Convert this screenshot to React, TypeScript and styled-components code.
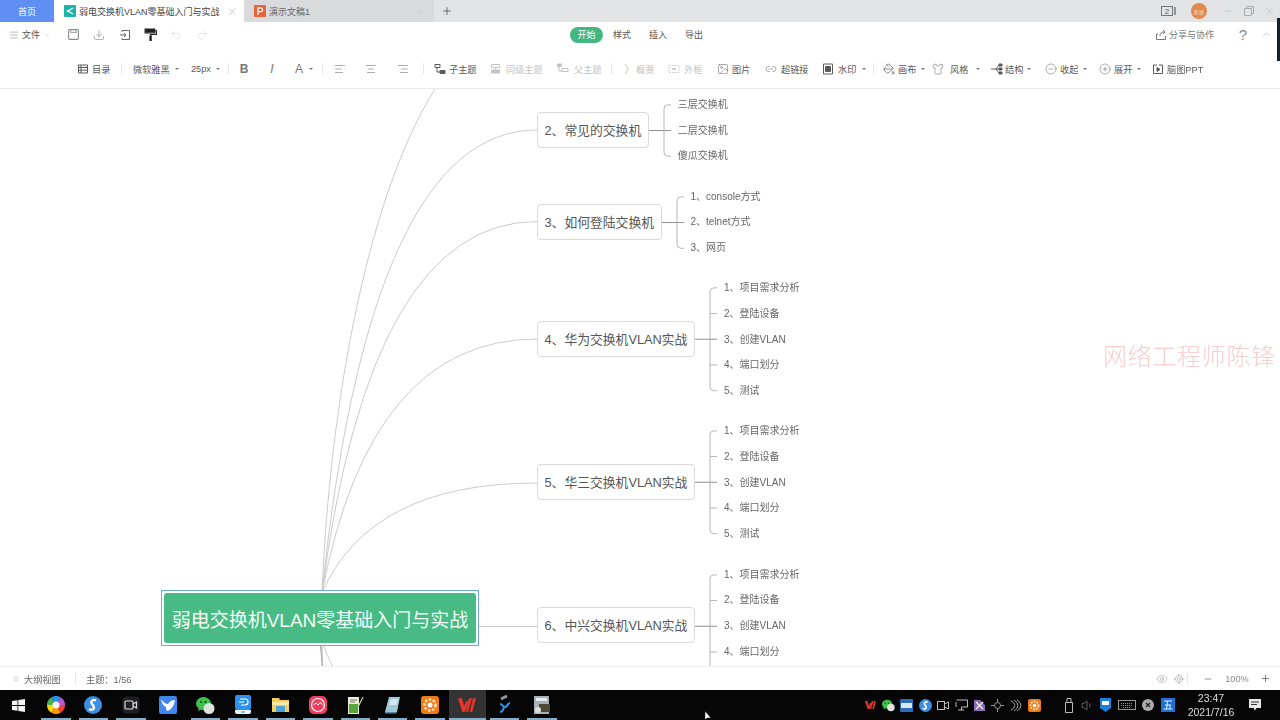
import React from 'react';
import styled, { createGlobalStyle } from 'styled-components';
import {
  AlignCenter, AlignLeft, AlignRight, ChevronDown, ChevronUp, CircleMinus, CirclePlus, Download,
  Eye, Image, Link2, LocateFixed, Menu, Minus, PaintBucket, Plus, Redo2, Shirt, Undo2,
  Volume1, X,
} from 'lucide-react';

const GlobalStyle = createGlobalStyle`
  html, body { margin: 0; padding: 0; background: #fff; }
  body { font-family: "Liberation Sans", "Noto Sans CJK SC", sans-serif; overflow: hidden; }
  * { box-sizing: border-box; }
`;

const Screen = styled.div`
  position: relative;
  width: 1280px;
  height: 720px;
  display: flex;
  flex-direction: column;
  overflow: hidden;
  filter: blur(0.45px);
`;

/* ---------- tab strip ---------- */
const TabStrip = styled.div`
  height: 22px;
  background: #e1e3e4;
  display: flex;
  align-items: stretch;
  flex-shrink: 0;
`;
const HomeTab = styled.div`
  width: 54px;
  background: #5f8ff2;
  color: #fff;
  font-size: 9px;
  display: flex;
  align-items: center;
  justify-content: center;
`;
const DocTab = styled.div<{ $active?: boolean }>`
  width: 190px;
  background: ${(p) => (p.$active ? '#fff' : '#d9dadb')};
  color: ${(p) => (p.$active ? '#444' : '#666')};
  display: flex;
  align-items: center;
  padding: 0 ${(p) => (p.$active ? 6 : 10)}px 0 10px;
  font-size: 9px;
  gap: 3px;
  white-space: nowrap;
  span { flex: 1; }
`;
const NewTab = styled.div`
  width: 26px;
  display: flex;
  align-items: center;
  justify-content: center;
  color: #444;
`;
const WindowControls = styled.div`
  margin-left: auto;
  display: flex;
  align-items: center;
  color: #aaa;
`;
const Avatar = styled.div`
  width: 16px;
  height: 16px;
  border-radius: 50%;
  background: #e08a52;
  color: #fbe0cc;
  font-size: 5px;
  display: flex;
  align-items: center;
  justify-content: center;
  margin: 0 10px 0 14px;
`;
const WinBtn = styled.div`
  width: 21px;
  display: flex;
  justify-content: center;
`;
const DarkEdge = styled.div`
  position: absolute;
  right: 0;
  top: 18px;
  width: 3px;
  height: 43px;
  background: #16202e;
`;

/* ---------- menu row ---------- */
const MenuRow = styled.div`
  height: 25px;
  display: flex;
  align-items: center;
  flex-shrink: 0;
  background: #fff;
  color: #555;
  font-size: 9px;
`;
const FileMenu = styled.div`
  width: 61px;
  padding-left: 9px;
  display: flex;
  align-items: center;
  gap: 3px;
`;
const QuickTools = styled.div`
  width: 509px;
  display: flex;
  align-items: center;
`;
const QuickBtn = styled.div<{ $dim?: boolean }>`
  width: 25.6px;
  display: flex;
  justify-content: center;
  color: ${(p) => (p.$dim ? '#ccc' : '#666')};
`;
const ModeTabs = styled.div`
  display: flex;
  align-items: center;
`;
const ModeTab = styled.div<{ $active?: boolean }>`
  height: 16px;
  line-height: 16px;
  width: ${(p) => (p.$active ? '33px' : '18px')};
  margin-right: ${(p) => (p.$active ? '10px' : '18px')};
  border-radius: 8px;
  text-align: center;
  white-space: nowrap;
  background: ${(p) => (p.$active ? '#45b680' : 'transparent')};
  color: ${(p) => (p.$active ? '#fff' : '#555')};
`;
const ShareArea = styled.div`
  margin-left: auto;
  display: flex;
  align-items: center;
  gap: 2px;
  padding-right: 7px;
  color: #777;
`;
const HelpMark = styled.div`
  width: 12px;
  margin: 0 9px 0 21px;
  text-align: center;
  font-size: 15px;
  line-height: 16px;
  color: #888;
`;

/* ---------- format toolbar ---------- */
const FormatBar = styled.div`
  height: 42px;
  padding: 2px 0 0 77px;
  display: flex;
  align-items: center;
  flex-shrink: 0;
  background: #fff;
  border-bottom: 1px solid #e9e9e9;
`;
const Tool = styled.div<{ $w: number; $gap: number; $off?: boolean }>`
  width: ${(p) => p.$w}px;
  display: flex;
  align-items: center;
  gap: ${(p) => p.$gap}px;
  font-size: 9.2px;
  white-space: nowrap;
  color: ${(p) => (p.$off ? '#c4c4c4' : '#5a5a5a')};
`;
const Caret = styled.i`
  width: 0;
  height: 0;
  margin-left: 2px;
  border: 2px solid transparent;
  border-top: 2.5px solid #777;
  border-bottom: 0;
`;
const Sep = styled.div<{ $after: number }>`
  width: 1px;
  height: 11px;
  background: #e6e6e6;
  margin-right: ${(p) => p.$after}px;
`;
const Glyph = styled.span<{ $italic?: boolean; $bold?: boolean }>`
  width: 12px;
  text-align: center;
  font-size: 12px;
  font-style: ${(p) => (p.$italic ? 'italic' : 'normal')};
  font-weight: ${(p) => (p.$bold ? 700 : 400)};
  color: #777;
`;

/* ---------- mind map ---------- */
const MapCanvas = styled.div`
  position: relative;
  flex: 1;
  overflow: hidden;
  background: #fff;
`;
const Lines = styled.svg`
  position: absolute;
  inset: 0;
`;
const Branch = styled.div<{ $top: number }>`
  position: absolute;
  left: 537px;
  top: ${(p) => p.$top}px;
  display: flex;
  align-items: center;
`;
const TopicBox = styled.div`
  height: 36px;
  margin-bottom: 1.2px;
  padding: 0 6.5px;
  border: 1px solid #d9d9d9;
  border-radius: 4px;
  background: #fff;
  color: #555;
  font-size: 12.8px;
  line-height: 35px;
  white-space: nowrap;
`;
const LeafList = styled.div`
  display: flex;
  flex-direction: column;
`;
const Leaf = styled.div`
  height: 25.7px;
  line-height: 25.7px;
  font-size: 10px;
  color: #666;
  white-space: nowrap;
`;
const RootFrame = styled.div`
  position: absolute;
  left: 161px;
  top: 501px;
  width: 318px;
  height: 56px;
  padding: 2px;
  border: 1px solid #6ea6ee;
  background: #fff;
`;
const RootTopic = styled.div`
  height: 100%;
  border-radius: 3px;
  background: #48bb85;
  color: #f2fbf6;
  font-size: 19px;
  display: flex;
  align-items: center;
  justify-content: center;
  white-space: nowrap;
`;
const Watermark = styled.div`
  position: absolute;
  left: 1103px;
  top: 248px;
  font-family: "Liberation Serif", "Noto Sans CJK SC", serif;
  font-size: 24px;
  font-weight: 300;
  letter-spacing: 0.7px;
  color: #f8cfcf;
  white-space: nowrap;
`;

/* ---------- status bar ---------- */
const StatusBar = styled.div`
  height: 24px;
  display: flex;
  align-items: center;
  flex-shrink: 0;
  padding-left: 13px;
  background: #fff;
  border-top: 1px solid #eee;
  color: #666;
  font-size: 9.2px;
`;
const OutlineBtn = styled.div`
  width: 62px;
  display: flex;
  align-items: center;
  gap: 5px;
`;
const StatusSep = styled.div<{ $after: number }>`
  width: 1px;
  height: 11px;
  background: #e6e6e6;
  margin-right: ${(p) => p.$after}px;
`;
const ZoomArea = styled.div`
  margin-left: auto;
  display: flex;
  align-items: center;
  padding-right: 8px;
  color: #777;
`;
const ZoomIcon = styled.div<{ $w: number; $dark?: boolean }>`
  width: ${(p) => p.$w}px;
  display: flex;
  justify-content: center;
  color: ${(p) => (p.$dark ? '#444' : '#888')};
`;

/* ---------- taskbar ---------- */
const Taskbar = styled.div`
  height: 30px;
  background: #060606;
  display: flex;
  align-items: stretch;
  flex-shrink: 0;
  color: #ddd;
`;
const TaskCell = styled.div<{ $open?: boolean; $focus?: boolean }>`
  position: relative;
  width: 37.4px;
  display: flex;
  align-items: center;
  justify-content: center;
  background: ${(p) => (p.$focus ? '#333' : 'transparent')};
  &::after {
    content: '';
    position: absolute;
    left: ${(p) => (p.$focus ? 0 : 4)}px;
    right: ${(p) => (p.$focus ? 0 : 4)}px;
    bottom: 0;
    height: 2px;
    background: ${(p) => (p.$open ? '#86aecb' : 'transparent')};
  }
`;
const Tray = styled.div`
  margin-left: auto;
  display: flex;
  align-items: center;
`;
const TrayIcon = styled.div<{ $w?: number }>`
  width: ${(p) => p.$w ?? 18.2}px;
  display: flex;
  justify-content: center;
  color: #bbb;
`;
const TrayGap = styled.div`
  width: 17px;
`;
const Clock = styled.div`
  width: 64px;
  text-align: center;
  font-size: 10.5px;
  line-height: 14px;
  color: #dcdcdc;
`;
const NoticeBtn = styled.div`
  width: 24px;
  margin-right: 13px;
  display: flex;
  justify-content: center;
`;
const Cursor = styled.svg`
  position: absolute;
  left: 705px;
  top: 711px;
`;

/* ---------- drawings ---------- */
const Ic = ({ s = 12, children }: { s?: number; children: React.ReactNode }) => (
  <svg width={s} height={s} viewBox="0 0 12 12" fill="none" stroke="currentColor" strokeWidth="1">
    {children}
  </svg>
);
const TocIcon = () => <Ic><path d="M1.5 2h9v8h-9zM1.5 4.5h9M1.5 7.2h9M4 2v8" /></Ic>;
const SubIcon = () => <Ic><path d="M1 1.5h5v3H1zM3 4.5v4.5h3" /><path d="M6 7.5h5v3H6z" fill="currentColor" /></Ic>;
const SiblingIcon = () => <Ic><path d="M1.5 1.5h8v3h-8zM5.5 4.5v2" /><path d="M1.5 7h8v3h-8z" fill="currentColor" /></Ic>;
const ParentIcon = () => <Ic><path d="M5 5.5h6v3H5zM2 3v5h3" /><path d="M.5 1h4v2.5h-4z" fill="currentColor" /></Ic>;
const BraceIcon = () => <Ic><path d="M3 1.5c2.5 0 1.5 4.5 3.5 4.5-2 0-1 4.5-3.5 4.5" /></Ic>;
const BoundaryIcon = () => <Ic><path d="M1 2.5h10v7H1z" strokeDasharray="1.6 1.2" /><path d="M4 6h4" strokeWidth="1.6" /></Ic>;
const MarkIcon = () => <Ic><path d="M1.5 1h9v10h-9z" /><path d="M3.5 3.5h5v5h-5z" fill="currentColor" /></Ic>;
const TreeIcon = () => <Ic><path d="M0 6h5M5 6l3-4M5 6l3 4M5 6h3" /><path d="M8 1h3v2H8zM8 5h3v2H8zM8 9h3v2H8z" fill="currentColor" /></Ic>;
const PptIcon = () => <Ic><path d="M3 2H1.5v8.5h9V2H9M4 1v2M8 1v2" /><path d="M5 4.5 8 6.5 5 8.5z" fill="currentColor" /></Ic>;
const SaveIcon = () => <Ic s={13}><rect x="1.5" y="1.5" width="9" height="9" rx="1" stroke="#888" /><path d="M3.5 1.5v2.5h5V1.5" stroke="#aaa" /></Ic>;
const ExportIcon = () => <Ic s={12}><path d="M3 3V1.5h7.5v9H3V9M1 6h6M5 4l2 2-2 2" /></Ic>;
const PainterIcon = () => (
  <svg width="13" height="13" viewBox="0 0 12 12">
    <path d="M1 1h9v3.5H1zM10 2.5h1.5v3.5H6v1.5" fill="none" stroke="#222" strokeWidth="1" />
    <path d="M1 1h9v3H1zM5 7h2.2v5H5z" fill="#222" />
  </svg>
);
const ShareIcon = () => <Ic><path d="M3 5H1.5v5.5h9V7M5 7c0-2.500 1.500-4 4-4M8 1l2 2-2 2" /></Ic>;
const SwitchIcon = () => (
  <svg width="16" height="12" viewBox="0 0 16 12" fill="none" stroke="#777">
    <rect x=".5" y="1.500" width="11" height="9" />
    <path d="M14 2v8" strokeWidth="1.500" />
    <text x="6" y="9" fontSize="8" textAnchor="middle" fill="#666" stroke="none" fontFamily="Liberation Sans">2</text>
  </svg>
);
const TealDoc = () => (
  <svg width="12" height="12" viewBox="0 0 12 12">
    <rect width="12" height="12" rx="1" fill="#1fb3ad" />
    <path d="M9 3 4 6l5 3" fill="none" stroke="#fff" strokeWidth="1.200" />
    <circle cx="4" cy="6" r="1.200" fill="#fff" />
  </svg>
);
const PptDoc = () => (
  <svg width="12" height="12" viewBox="0 0 12 12">
    <rect width="12" height="12" rx="1" fill="#e8623b" />
    <path d="M4 10V2.800h2.600a1.800 1.800 0 0 1 0 3.800H4" fill="none" stroke="#fff" strokeWidth="1.300" />
  </svg>
);

const Pinwheel = () => {
  const colors = ['#f44336', '#ff9800', '#ffd600', '#4caf50', '#2196f3', '#ba55d3'];
  return (
    <svg width="18" height="18" viewBox="-9 -9 18 18">
      {colors.map((c, i) => {
        const a0 = (i * Math.PI) / 3;
        const a1 = ((i + 1) * Math.PI) / 3;
        return (
          <path
            key={c}
            fill={c}
            d={`M0 0L${9 * Math.cos(a0)} ${9 * Math.sin(a0)}A9 9 0 0 1 ${9 * Math.cos(a1)} ${9 * Math.sin(a1)}Z`}
          />
        );
      })}
      <circle r="3.500" fill="#eef3ff" />
    </svg>
  );
};
const WinLogo = () => (
  <svg width="13" height="13" viewBox="0 0 13 13" fill="#f4f4f4">
    <path d="M0 2 5.500 1.200V6H0zM6.300 1.100 13 0v6H6.300zM0 7h5.500v4.800L0 11zM6.300 7H13v6l-6.700-1z" />
  </svg>
);
const SogouS = ({ s = 18 }: { s?: number }) => (
  <svg width={s} height={s} viewBox="0 0 18 18">
    <circle cx="9" cy="9" r="9" fill="#3d8fe0" />
    <path d="M12 4.500C9 3 6 5 8 8c1.500 2 3 3 1.500 5-1 1-3 .8-4.500 0" fill="none" stroke="#fff" strokeWidth="2.300" />
  </svg>
);
const CameraTile = () => (
  <svg width="18" height="18" viewBox="0 0 18 18" fill="none" stroke="#ddd" strokeWidth="1.200">
    <rect x=".5" y=".5" width="17" height="17" rx="4" fill="#1d1f22" stroke="none" />
    <rect x="3" y="5" width="8" height="8" rx="1" />
    <path d="M11 8l3.500-2v6L11 10" />
  </svg>
);
const FeatherTile = () => (
  <svg width="18" height="18" viewBox="0 0 18 18">
    <rect width="18" height="18" rx="2" fill="#3f86ef" />
    <path d="M2 3c3 4 5 5 7 5 2-3 4-4 7-4-1 5-3 10-8 11-1-1-1-3-1-4C4 10 3 7 2 3z" fill="#fff" />
  </svg>
);
const WeChat = ({ s = 19 }: { s?: number }) => (
  <svg width={s} height={s} viewBox="0 0 19 19">
    <ellipse cx="7.500" cy="7.500" rx="7.500" ry="6.500" fill="#3fc24a" />
    <path d="M3 11l-1 4 4-2z" fill="#3fc24a" />
    <circle cx="13" cy="12.500" r="5.500" fill="#dfe3e0" />
    <circle cx="5" cy="6" r="1" fill="#14401a" />
    <circle cx="9.500" cy="6" r="1" fill="#14401a" />
  </svg>
);
const BlueTile = () => (
  <svg width="18" height="20" viewBox="0 0 18 20">
    <rect x="1" y="0" width="16" height="15" rx="2" fill="#2f92ee" />
    <path d="M1 15h16v2a2 2 0 0 1-2 2H3a2 2 0 0 1-2-2z" fill="#e9f3fb" />
    <path d="M6 4h5a3 3 0 0 1 0 6H7M5 7h5" fill="none" stroke="#fff" strokeWidth="1.200" />
    <rect x="7" y="16.500" width="4" height="1" fill="#2f92ee" />
  </svg>
);
const FolderIcon = () => (
  <svg width="17" height="16" viewBox="0 0 17 16">
    <path d="M0 1h7l1 2h9v12H0z" fill="#f3cf5e" />
    <rect x="0" y="5" width="17" height="3" fill="#fbe7a5" />
    <rect x="4" y="9" width="9" height="6" fill="#4ba3d8" />
  </svg>
);
const PinkTile = () => (
  <svg width="18" height="18" viewBox="0 0 18 18">
    <rect width="18" height="18" rx="5" fill="#ee3e62" />
    <circle cx="9" cy="9" r="6.500" fill="none" stroke="#fff" strokeWidth="1.200" />
    <path d="M4.500 9 7 7l2 2 2-2.500 2.500 2" fill="none" stroke="#fff" strokeWidth="1" />
  </svg>
);
const NoteGreen = () => (
  <svg width="18" height="19" viewBox="0 0 18 19">
    <path d="M2 1h11v17H2z" fill="#e9efd8" />
    <rect x="3" y="8" width="9" height="9" fill="#56a53d" />
    <path d="M4 4h7M4 6h5" stroke="#777" />
    <path d="M12 11l5-10" stroke="#c9d08a" strokeWidth="1.300" />
  </svg>
);
const NoteBlue = () => (
  <svg width="17" height="18" viewBox="0 0 17 18">
    <path d="M5 1h11l-3 15H1z" fill="#9fc7d8" />
    <path d="M1 16h12l-1 1.500H1z" fill="#5f8797" />
    <path d="M7 3h7l-1.500 6H5z" fill="#d3e8f0" />
  </svg>
);
const GearTile = ({ s = 18 }: { s?: number }) => (
  <svg width={s} height={s} viewBox="0 0 18 18">
    <rect width="18" height="18" rx="3" fill="#f07b14" />
    <circle cx="9" cy="9" r="5.500" fill="none" stroke="#fbe3c9" strokeWidth="2.500" strokeDasharray="2.500 1.500" />
    <circle cx="9" cy="9" r="2.500" fill="#fff" />
  </svg>
);
const WpsW = ({ s = 18 }: { s?: number }) => (
  <svg width={s} height={s * 0.8} viewBox="0 0 18 14">
    <path d="M0 0h4l2.200 8L8 3h2.500l-3.500 11H4.500zM11 0h3l-4 14H8z M15 0h3l-3.800 14h-2.500z" fill="#e8352c" />
  </svg>
);
const NodesIcon = () => (
  <svg width="14" height="20" viewBox="0 0 14 20" fill="none" stroke="#2f8fe0" strokeWidth="2.200">
    <path d="M2 9c3 0 2 3 5 3M12 8c-3 0-2 4-5 4M2 17c4 0 2-4 5-5" />
    <path d="M3 4l6-3" stroke="#8a96a0" strokeWidth="3" />
  </svg>
);
const ArchiveIcon = () => (
  <svg width="18" height="20" viewBox="0 0 18 20">
    <rect x="1" y="1" width="15" height="18" fill="#a8b1b8" />
    <rect x="3" y="3" width="11" height="3" fill="#e6ebef" />
    <rect x="6" y="9" width="11" height="8" fill="#4b4a36" />
    <circle cx="5" cy="15" r="3" fill="#dedfd8" />
  </svg>
);
const FileBlue = () => (
  <svg width="13" height="13" viewBox="0 0 13 13">
    <rect width="13" height="13" rx="1" fill="#2e6bb3" />
    <rect x="1" y="4" width="11" height="5" fill="#dbe7f2" />
  </svg>
);
const PurpleMark = () => (
  <svg width="13" height="13" viewBox="0 0 13 13">
    <path d="M1 1h6l5 5v6H1z" fill="#8d6ab5" />
    <path d="M3 3l7 7M10 3l-7 7" stroke="#eee" strokeWidth="1.400" />
  </svg>
);
const TeamBlue = () => (
  <svg width="11" height="14" viewBox="0 0 11 14">
    <path d="M0 0h11v10l-5.500 4L0 10z" fill="#1b7fdc" />
    <rect x="2" y="3" width="7" height="4" fill="#fff" />
  </svg>
);
const ImeTile = () => (
  <svg width="14" height="14" viewBox="0 0 14 14" stroke="#dfeeff" fill="none">
    <rect width="14" height="14" fill="#1e6fd0" stroke="none" />
    <path d="M3 3h8M4 7h6M2.500 11h9M6.500 3 5.500 11M9 7v4" />
  </svg>
);
const KeyboardIcon = () => (
  <svg width="18" height="12" viewBox="0 0 18 12" fill="none" stroke="#999">
    <rect x=".5" y="1.500" width="17" height="9" />
    <path d="M3 4.500h12M3 6.500h12M5 8.500h8" strokeDasharray="1 1" />
  </svg>
);
const CircleX = () => (
  <svg width="12" height="12" viewBox="0 0 12 12">
    <circle cx="6" cy="6" r="6" fill="#aaa" />
    <path d="M4 4l4 4M8 4l-4 4" stroke="#222" strokeWidth="1.300" />
  </svg>
);
const UsbIcon = () => (
  <svg width="8" height="15" viewBox="0 0 8 15" fill="none" stroke="#bbb">
    <path d="M.5 4.500h7v10h-7zM2 4.500V.5h4v4" />
  </svg>
);
const MonitorIcon = () => (
  <svg width="13" height="12" viewBox="0 0 13 12" fill="none" stroke="#bbb">
    <path d="M1.500 1h11v7h-6v3M3 11h6M1 3v5" />
  </svg>
);
const GizmoIcon = () => (
  <svg width="13" height="13" viewBox="0 0 13 13" fill="none" stroke="#999">
    <circle cx="6.500" cy="6.500" r="3" />
    <path d="M6.500 0v3M6.500 10v3M0 6.500h3M10 6.500h3" />
  </svg>
);
const WaveIcon = () => (
  <svg width="13" height="13" viewBox="0 0 13 13" fill="none" stroke="#aaa">
    <path d="M2 2c5 2 5 7 0 9M5 1c5 3 5 8 0 11M8 1c5 3 5 8 0 11" />
  </svg>
);
const NoticeIcon = () => (
  <svg width="12" height="12" viewBox="0 0 12 12">
    <path d="M0 0h12v9H7.500L6 11.500 4.500 9H0z" fill="#e8e8e8" />
    <path d="M2 3h8M2 5.500h6" stroke="#333" />
  </svg>
);

/* ---------- data ---------- */
type ToolDef = { w?: number; gap?: number; icon?: React.ReactNode; label?: string; caret?: boolean; off?: boolean; sep?: number };

const li = { size: 12, strokeWidth: 1 };
const tools: ToolDef[] = [
  { w: 44, gap: 3, icon: <TocIcon />, label: '目录' },
  { sep: 11 },
  { w: 58, gap: 3, label: '微软雅黑', caret: true },
  { w: 37, gap: 3, label: '25px', caret: true },
  { sep: 9 },
  { w: 28, icon: <Glyph $bold>B</Glyph> },
  { w: 27, icon: <Glyph $italic>I</Glyph> },
  { w: 29, gap: 2, icon: <Glyph>A</Glyph>, caret: true },
  { sep: 11 },
  { w: 31, icon: <AlignLeft {...li} /> },
  { w: 32, icon: <AlignCenter {...li} /> },
  { w: 26, icon: <AlignRight {...li} /> },
  { sep: 10 },
  { w: 56, gap: 3, icon: <SubIcon />, label: '子主题' },
  { w: 67, gap: 4, icon: <SiblingIcon />, label: '同级主题', off: true },
  { w: 54, gap: 5, icon: <ParentIcon />, label: '父主题', off: true },
  { sep: 10 },
  { w: 46, gap: 2, icon: <BraceIcon />, label: '概要', off: true },
  { w: 49, gap: 4, icon: <BoundaryIcon />, label: '外框', off: true },
  { w: 48, gap: 3, icon: <Image {...li} />, label: '图片' },
  { w: 57, gap: 4, icon: <Link2 {...li} />, label: '超链接' },
  { w: 51, gap: 4, icon: <MarkIcon />, label: '水印', caret: true },
  { sep: 9 },
  { w: 49, gap: 3, icon: <PaintBucket size={12} strokeWidth={1.4} />, label: '画布', caret: true },
  { w: 59, gap: 6, icon: <Shirt {...li} />, label: '风格', caret: true },
  { w: 54, gap: 2, icon: <TreeIcon />, label: '结构', caret: true },
  { w: 54, gap: 3, icon: <CircleMinus {...li} />, label: '收起', caret: true },
  { w: 53, gap: 3, icon: <CirclePlus {...li} />, label: '展开', caret: true },
  { w: 56, gap: 3, icon: <PptIcon />, label: '脑图PPT' },
];

const feature = ['1、项目需求分析', '2、登陆设备', '3、创建VLAN', '4、端口划分', '5、测试'];
const branches = [
  { cy: 130.6, title: '2、常见的交换机', leaves: ['三层交换机', '二层交换机', '傻瓜交换机'] },
  { cy: 222.1, title: '3、如何登陆交换机', leaves: ['1、console方式', '2、telnet方式', '3、网页'] },
  { cy: 339.6, title: '4、华为交换机VLAN实战', leaves: feature },
  { cy: 482.6, title: '5、华三交换机VLAN实战', leaves: feature },
  // the fifth leaf of this one sits below the status bar
  { cy: 626, title: '6、中兴交换机VLAN实战', leaves: [...feature.slice(0, 4), ''] },
];

const LEAF_H = 25.7;
const CANVAS_TOP = 89;

const Connector = ({ count }: { count: number }) => {
  const h = count * LEAF_H;
  const first = LEAF_H / 2;
  const last = h - LEAF_H / 2;
  const ticks = Array.from({ length: count - 2 }, (_, i) => first + (i + 1) * LEAF_H).filter((y) => Math.abs(y - h / 2) > 1);
  return (
    <svg width="29" height={h} fill="none" stroke="#b5b5b5">
      <path d={`M0 ${h / 2}H22`} stroke="#8f8f8f" />
      <path d={`M22 ${first}H19Q15 ${first} 15 ${first + 4}V${last - 4}Q15 ${last} 19 ${last}H22`} />
      {ticks.map((y) => <path key={y} d={`M15 ${y}H22`} />)}
    </svg>
  );
};

const trayIcons: React.ReactNode[] = [
  <WpsW s={11} />, <WeChat s={13} />, <FileBlue />, <SogouS s={13} />, <svg width="12" height="11" viewBox="0 0 12 11" fill="none" stroke="#bbb"><rect x=".5" y="1.500" width="7" height="8" /><path d="M7.500 4 11.500 2v7l-4-2" /></svg>,
  <MonitorIcon />, <PurpleMark />, <GizmoIcon />, <WaveIcon />, <GearTile s={13} />,
];

const taskApps: { node: React.ReactNode; open: boolean; focus?: boolean }[] = [
  { node: <Pinwheel />, open: true },
  { node: <SogouS />, open: true },
  { node: <CameraTile />, open: true },
  { node: <FeatherTile />, open: false },
  { node: <WeChat />, open: true },
  { node: <BlueTile />, open: true },
  { node: <FolderIcon />, open: true },
  { node: <PinkTile />, open: true },
  { node: <NoteGreen />, open: true },
  { node: <NoteBlue />, open: true },
  { node: <GearTile />, open: true },
  { node: <WpsW />, open: true, focus: true },
  { node: <NodesIcon />, open: true },
  { node: <ArchiveIcon />, open: true },
];

export default function App() {
  return (
    <>
      <GlobalStyle />
      <Screen>
        <TabStrip>
          <HomeTab>首页</HomeTab>
          <DocTab $active>
            <TealDoc />
            <span>弱电交换机VLAN零基础入门与实战</span>
            <X size={11} strokeWidth={1} color="#999" />
          </DocTab>
          <DocTab>
            <PptDoc />
            <span>演示文稿1</span>
            <X size={6} strokeWidth={1} color="#aaa" />
          </DocTab>
          <NewTab><Plus size={12} strokeWidth={1.4} /></NewTab>
          <WindowControls>
            <SwitchIcon />
            <Avatar>陈锋</Avatar>
            <WinBtn><Minus size={10} strokeWidth={1} /></WinBtn>
            <WinBtn>
              <svg width="10" height="10" viewBox="0 0 10 10" fill="none" stroke="currentColor">
                <path d="M.5 2.500h7v7h-7zM2.500 2.500v-2h7v7h-2" />
              </svg>
            </WinBtn>
            <WinBtn><X size={11} strokeWidth={1} /></WinBtn>
          </WindowControls>
        </TabStrip>

        <MenuRow>
          <FileMenu>
            <Menu size={10} strokeWidth={1} />
            <span>文件</span>
            <ChevronDown size={8} strokeWidth={1} color="#aaa" />
          </FileMenu>
          <QuickTools>
            <QuickBtn><SaveIcon /></QuickBtn>
            <QuickBtn><Download {...li} /></QuickBtn>
            <QuickBtn><ExportIcon /></QuickBtn>
            <QuickBtn><PainterIcon /></QuickBtn>
            <QuickBtn $dim><Undo2 {...li} /></QuickBtn>
            <QuickBtn $dim><Redo2 {...li} /></QuickBtn>
          </QuickTools>
          <ModeTabs>
            <ModeTab $active>开始</ModeTab>
            <ModeTab>样式</ModeTab>
            <ModeTab>插入</ModeTab>
            <ModeTab>导出</ModeTab>
          </ModeTabs>
          <ShareArea>
            <ShareIcon />
            <span>分享与协作</span>
            <HelpMark>?</HelpMark>
            <ChevronUp size={13} strokeWidth={1} color="#aaa" />
          </ShareArea>
        </MenuRow>

        <FormatBar>
          {tools.map((t, i) =>
            t.sep !== undefined ? (
              <Sep key={i} $after={t.sep} />
            ) : (
              <Tool key={i} $w={t.w ?? 0} $gap={t.gap ?? 0} $off={t.off}>
                {t.icon}
                {t.label && <span>{t.label}</span>}
                {t.caret && <Caret />}
              </Tool>
            ),
          )}
        </FormatBar>

        <MapCanvas>
          <Lines width="1280" height="578" viewBox={`0 ${CANVAS_TOP} 1280 578`} fill="none" stroke="#cbcbcb">
            <path d="M322 593C330 400 369 185 441 80" />
            <path d="M322 593Q370 130 537 130" />
            <path d="M322 593Q370 221.500 537 221.500" />
            <path d="M322 593Q370 339 537 339" />
            <path d="M322 593Q370 483 537 483" />
            <path d="M479 626.500H537" />
            <path d="M322 644V668M320 644 323 668" stroke="#a8a8a8" />
            <path d="M323 644Q327 655 333 668" />
          </Lines>

          {branches.map((b) => (
            <Branch key={b.title} $top={b.cy - (b.leaves.length * LEAF_H) / 2 - CANVAS_TOP}>
              <TopicBox>{b.title}</TopicBox>
              <Connector count={b.leaves.length} />
              <LeafList>
                {b.leaves.map((l, i) => <Leaf key={i}>{l}</Leaf>)}
              </LeafList>
            </Branch>
          ))}

          <RootFrame>
            <RootTopic>弱电交换机VLAN零基础入门与实战</RootTopic>
          </RootFrame>
          <Watermark>网络工程师陈锋</Watermark>
        </MapCanvas>

        <StatusBar>
          <OutlineBtn>
            <Menu size={6} strokeWidth={1} />
            <span>大纲视图</span>
          </OutlineBtn>
          <StatusSep $after={10} />
          <span>主题：1/56</span>
          <ZoomArea>
            <ZoomIcon $w={17}><Eye size={12} strokeWidth={1} /></ZoomIcon>
            <ZoomIcon $w={17}><LocateFixed size={12} strokeWidth={1} /></ZoomIcon>
            <StatusSep $after={12} />
            <ZoomIcon $w={16} $dark><Minus size={10} strokeWidth={1.4} /></ZoomIcon>
            <ZoomIcon $w={42}>100%</ZoomIcon>
            <ZoomIcon $w={14} $dark><Plus size={11} strokeWidth={1.4} /></ZoomIcon>
          </ZoomArea>
        </StatusBar>

        <Taskbar>
          <TaskCell><WinLogo /></TaskCell>
          {taskApps.map((a, i) => (
            <TaskCell key={i} $open={a.open} $focus={a.focus}>{a.node}</TaskCell>
          ))}
          <Tray>
            {trayIcons.map((n, i) => <TrayIcon key={i}>{n}</TrayIcon>)}
            <TrayGap />
            <TrayIcon><UsbIcon /></TrayIcon>
            <TrayIcon><Volume1 size={13} strokeWidth={1} /></TrayIcon>
            <TrayIcon><TeamBlue /></TrayIcon>
            <TrayIcon $w={24}><KeyboardIcon /></TrayIcon>
            <TrayIcon><CircleX /></TrayIcon>
            <TrayIcon $w={22}><ImeTile /></TrayIcon>
            <Clock>23:47<br />2021/7/16</Clock>
            <NoticeBtn><NoticeIcon /></NoticeBtn>
          </Tray>
        </Taskbar>

        <DarkEdge />
        <Cursor width="8" height="9" viewBox="0 0 8 9">
          <path d="M0 0v9l2-2h4z" fill="#fff" stroke="#000" strokeWidth=".5" />
        </Cursor>
      </Screen>
    </>
  );
}
